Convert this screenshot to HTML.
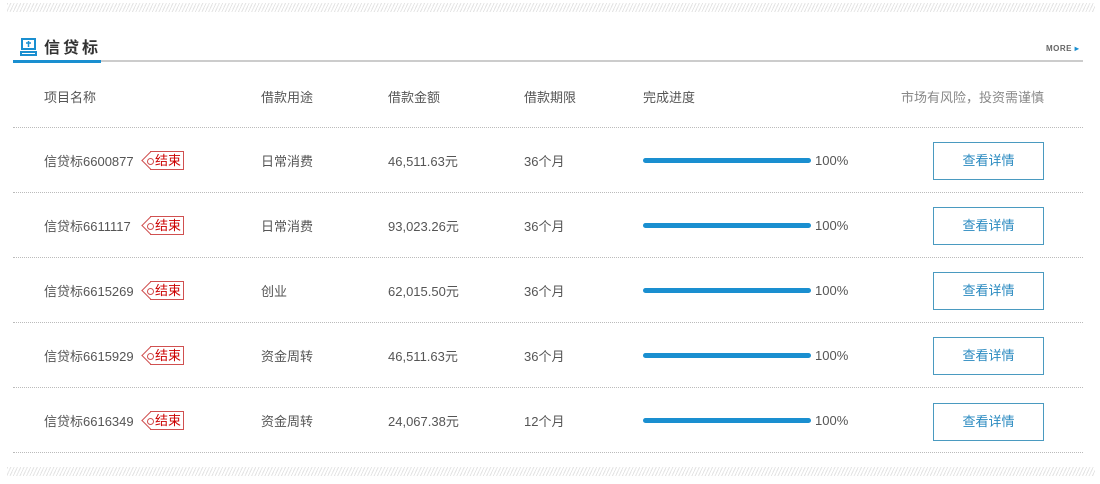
<!DOCTYPE html>
<html><head><meta charset="utf-8"><style>
*{margin:0;padding:0;box-sizing:border-box}
body{width:1100px;height:484px;background:#fff;font-family:"Liberation Sans","Noto Sans CJK SC",sans-serif;font-size:13px;color:#555;position:relative;overflow:hidden}
.hatch{position:absolute;left:7px;width:1088px;height:9px;background:repeating-linear-gradient(115deg,#e4e4e4 0 1px,#fff 1px 3px)}
.abs{position:absolute;white-space:nowrap;line-height:16px}
.t{margin-top:2px}
.dot{position:absolute;left:13px;width:1070px;border-top:1px dotted #bbb}
.bar{position:absolute;left:643px;width:168px;height:5px;border-radius:3px;background:#1a8fd0}
.btn{position:absolute;left:933px;width:111px;height:38px;border:1px solid #4a9ac0;color:#2a8ac0;text-align:center;line-height:36px;font-size:13px}
.tag{position:absolute;left:150px;width:34px;height:19px;border:1px solid #d05050;border-left:none;color:#c00;font-size:13px;line-height:17px;padding-left:5px}
.tag:before{content:"";position:absolute;left:-6px;top:2px;width:12px;height:12px;border-left:1px solid #d05050;border-bottom:1px solid #d05050;transform:rotate(45deg)}
.tag:after{content:"";position:absolute;left:-3px;top:6px;width:5px;height:5px;border:1px solid #d05050;border-radius:50%}
</style></head><body>
<div class="hatch" style="top:3px"></div>
<div class="hatch" style="top:467px"></div>
<svg class="abs" style="left:20px;top:38px" width="18" height="20" viewBox="0 0 18 20"><rect x="2" y="1" width="13" height="10" fill="none" stroke="#1a8fd0" stroke-width="2"/><path d="M8.5 3v6M6 5h5" stroke="#1a8fd0" stroke-width="1.5"/><path d="M1 14h15v3H1z" fill="none" stroke="#1a8fd0" stroke-width="2"/></svg>
<div class="abs" style="left:44px;top:39px;font-size:16px;line-height:20px;font-weight:bold;color:#333;letter-spacing:3px">信贷标</div>
<div class="abs" style="left:13px;top:60px;width:1070px;height:2px;background:#ccc"></div>
<div class="abs" style="left:13px;top:60px;width:88px;height:3px;background:#1a8fd0"></div>
<div class="abs" style="left:1046px;top:41px;font-size:8px;font-weight:bold;color:#666;letter-spacing:0.5px">MORE <span style="color:#1a8fd0">▸</span></div>
<div class="abs" style="left:44px;top:90px">项目名称</div>
<div class="abs" style="left:261px;top:90px">借款用途</div>
<div class="abs" style="left:388px;top:90px">借款金额</div>
<div class="abs" style="left:524px;top:90px">借款期限</div>
<div class="abs" style="left:643px;top:90px">完成进度</div>
<div class="abs" style="left:901px;top:90px;color:#888">市场有风险，投资需谨慎</div>
<div class="dot" style="top:127px"></div>
<div class="dot" style="top:192px"></div>
<div class="dot" style="top:257px"></div>
<div class="dot" style="top:322px"></div>
<div class="dot" style="top:387px"></div>
<div class="dot" style="top:452px"></div>

<div class="abs" style="left:44px;top:154px">信贷标6600877</div><div class="tag" style="top:151px">结束</div>
<div class="abs" style="left:261px;top:154px">日常消费</div><div class="abs" style="left:388px;top:154px">46,511.63元</div><div class="abs" style="left:524px;top:154px">36个月</div>
<div class="bar" style="top:158px"></div><div class="abs" style="left:815px;top:153px">100%</div><div class="btn" style="top:142px">查看详情</div>

<div class="abs" style="left:44px;top:219px">信贷标6611117</div><div class="tag" style="top:216px">结束</div>
<div class="abs" style="left:261px;top:219px">日常消费</div><div class="abs" style="left:388px;top:219px">93,023.26元</div><div class="abs" style="left:524px;top:219px">36个月</div>
<div class="bar" style="top:223px"></div><div class="abs" style="left:815px;top:218px">100%</div><div class="btn" style="top:207px">查看详情</div>

<div class="abs" style="left:44px;top:284px">信贷标6615269</div><div class="tag" style="top:281px">结束</div>
<div class="abs" style="left:261px;top:284px">创业</div><div class="abs" style="left:388px;top:284px">62,015.50元</div><div class="abs" style="left:524px;top:284px">36个月</div>
<div class="bar" style="top:288px"></div><div class="abs" style="left:815px;top:283px">100%</div><div class="btn" style="top:272px">查看详情</div>

<div class="abs" style="left:44px;top:349px">信贷标6615929</div><div class="tag" style="top:346px">结束</div>
<div class="abs" style="left:261px;top:349px">资金周转</div><div class="abs" style="left:388px;top:349px">46,511.63元</div><div class="abs" style="left:524px;top:349px">36个月</div>
<div class="bar" style="top:353px"></div><div class="abs" style="left:815px;top:348px">100%</div><div class="btn" style="top:337px">查看详情</div>

<div class="abs" style="left:44px;top:414px">信贷标6616349</div><div class="tag" style="top:411px">结束</div>
<div class="abs" style="left:261px;top:414px">资金周转</div><div class="abs" style="left:388px;top:414px">24,067.38元</div><div class="abs" style="left:524px;top:414px">12个月</div>
<div class="bar" style="top:418px"></div><div class="abs" style="left:815px;top:413px">100%</div><div class="btn" style="top:403px">查看详情</div>
</body></html>
